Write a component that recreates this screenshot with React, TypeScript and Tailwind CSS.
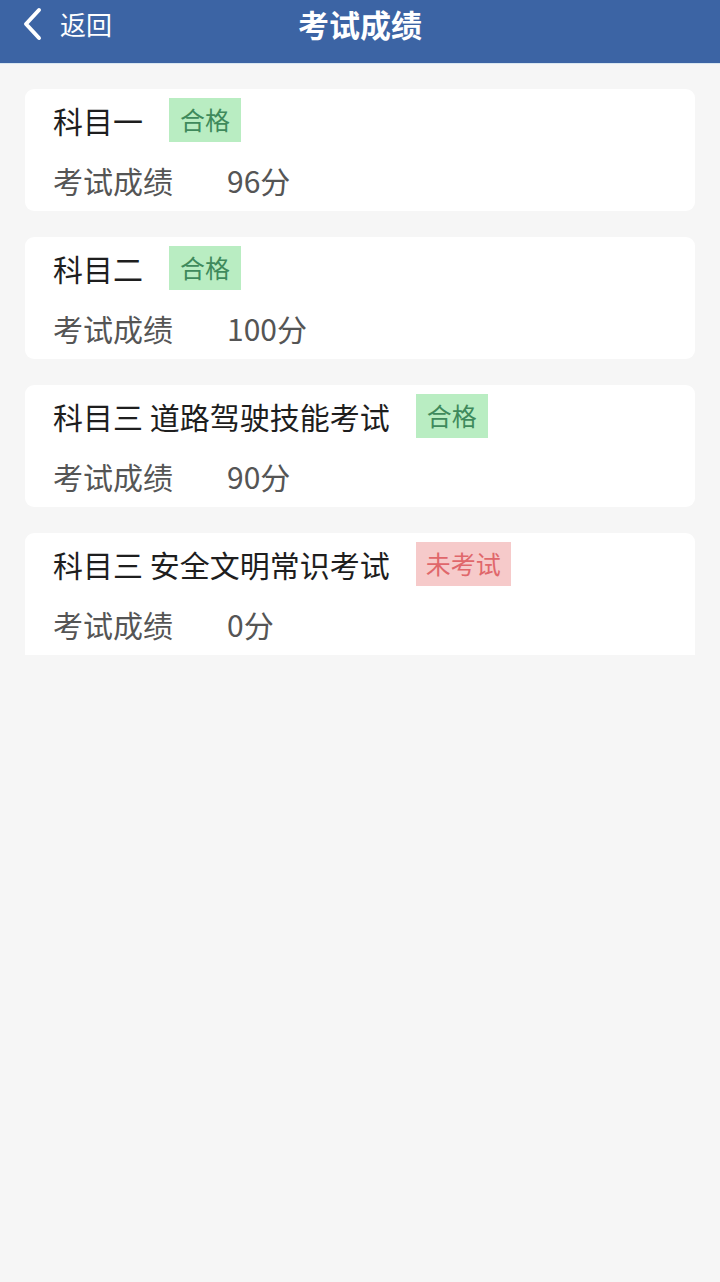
const results = [
  { name: "科目一", passed: true, score: 96 },
  { name: "科目二", passed: true, score: 100 },
  { name: "科目三 道路驾驶技能考试", passed: true, score: 90 },
  { name: "科目三 安全文明常识考试", passed: false, score: 0 },
];

function Badge({ passed }: { passed: boolean }) {
  return passed ? (
    <span className="ml-[26px] flex h-[44px] items-center bg-[#b9edc2] px-[11px] text-[25px] text-[#3f8a5c]">
      合格
    </span>
  ) : (
    <span className="ml-[26px] flex h-[44px] items-center bg-[#f6caca] px-[10px] text-[25px] text-[#e0676b]">
      未考试
    </span>
  );
}

export default function App() {
  return (
    <div className="min-h-[1282px] bg-[#f6f6f6] font-['Noto_Sans_CJK_SC','Noto_Sans',sans-serif]">
      <header className="relative flex h-[64px] items-center border-b border-[#d8e6f0] bg-[#3c64a4] pb-[16px] text-white">
        <div className="flex items-center pl-[20px]">
          <svg width="26" height="34" viewBox="0 0 26 34" fill="none">
            <path d="M19 3 L6 17 L19 31" stroke="white" strokeWidth="4" strokeLinecap="round" strokeLinejoin="round" />
          </svg>
          <span className="ml-[14px] text-[26px] leading-none">返回</span>
        </div>
        <h1 className="absolute top-[8px] left-1/2 -translate-x-1/2 text-[31px] font-bold leading-[32px]">考试成绩</h1>
      </header>
      <div className="h-[591px] overflow-hidden">
        <div className="flex flex-col gap-[26px] px-[25px] pt-[25px]">
          {results.map((r) => (
            <div key={r.name} className="rounded-[9px] bg-white px-[28px] pt-[9px] pb-[9px] last:rounded-b-none">
              <div className="flex h-[44px] items-center">
                <span className="text-[30px] leading-none text-[#1e1e1e]">{r.name}</span>
                <Badge passed={r.passed} />
              </div>
              <div className="mt-[16px] flex h-[44px] items-center text-[30px] leading-none text-[#555555]">
                <span>考试成绩</span>
                <span className="ml-[54px]">{r.score}分</span>
              </div>
            </div>
          ))}
        </div>
      </div>
    </div>
  );
}
